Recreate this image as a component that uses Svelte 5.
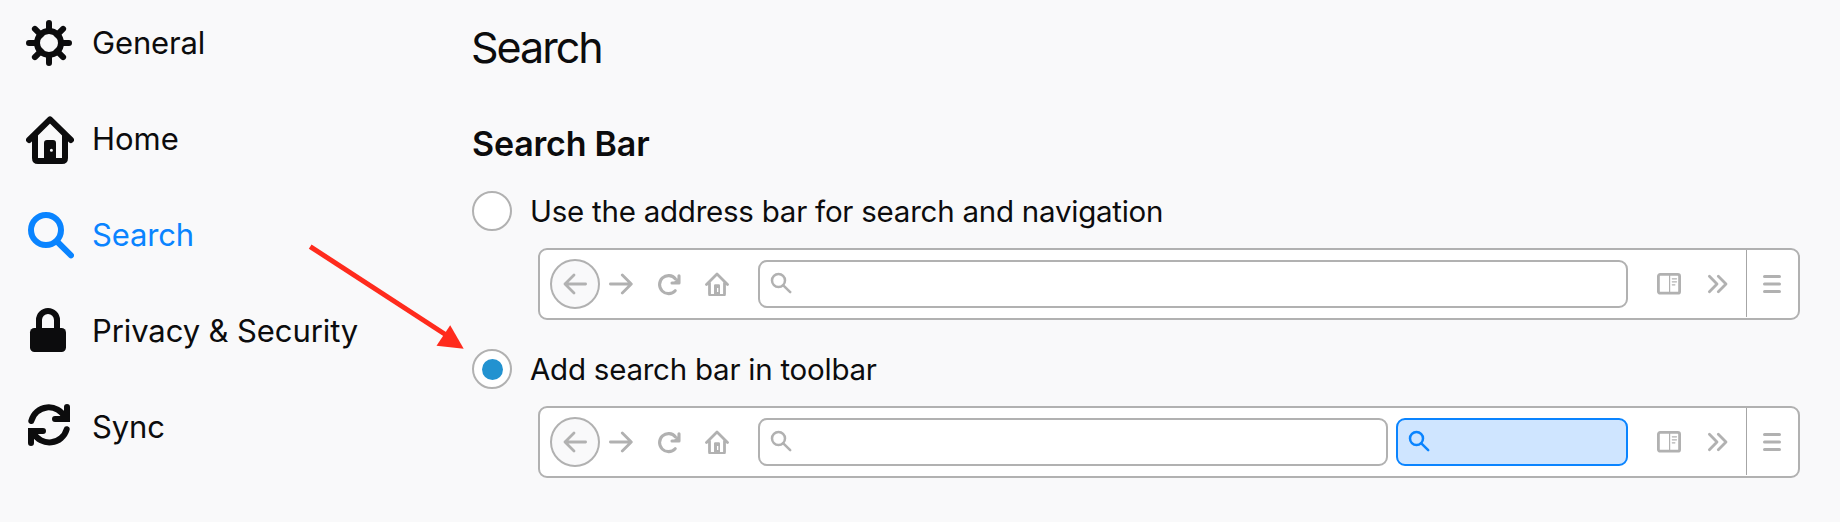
<script>
  const categories = [
    { id: 'general', label: 'General', spacing: -0.15 },
    { id: 'home', label: 'Home', spacing: -0.05 },
    { id: 'search', label: 'Search', spacing: -0.15 },
    { id: 'privacy', label: 'Privacy & Security', spacing: -0.1 },
    { id: 'sync', label: 'Sync', spacing: -0.1 }
  ];
  const options = [
    { id: 'address', label: 'Use the address bar for search and navigation', separate: false },
    { id: 'separate', label: 'Add search bar in toolbar', separate: true }
  ];
  let active = $state('search');
  let selected = $state('separate');
</script>

{#snippet magnifier()}
  <svg class="magnifier" viewBox="0 0 24 24">
    <circle cx="8.5" cy="8.5" r="6.5" /><path d="M13.3 13.3 20.2 20.2" />
  </svg>
{/snippet}

<div class="page">
  <nav>
    {#each categories as c (c.id)}
      <button class="category" class:active={active === c.id} onclick={() => (active = c.id)}>
        <svg viewBox="0 0 48 48">
          {#if c.id === 'general'}
            <circle cx="23" cy="23" r="12" />
            <path d="M23 3v8M23 35v8M3 23h8M35 23h8M8.9 8.9l6 6M31.1 31.1l6 6M8.9 37.1l6-6M31.1 14.9l6-6" />
          {:else if c.id === 'home'}
            <path d="M3 24 24 3.4 45 24M9 19v23q0 3 3 3h24q3 0 3-3V19" />
            <path class="solid" fill-rule="evenodd" d="M18 45V27q0-3 3-3h6q3 0 3 3v18zM25.4 32.8a1.5 1.5 0 1 0 0 3 1.5 1.5 0 0 0 0-3z" />
          {:else if c.id === 'search'}
            <circle cx="20" cy="18" r="15" /><path d="M31 29.5 45 43.3" />
          {:else if c.id === 'privacy'}
            <path d="M13 22V12a9 9 0 0 1 18 0v10" />
            <rect class="solid" x="4" y="20" width="36" height="24" rx="4.5" />
          {:else}
            <path d="M5.3 17A18 18 0 0 1 39 13.5M41 3v12H29M40.7 25.2A18 18 0 0 1 7.5 29M5 39V27h12" />
            <path class="solid" d="M41 5v13H30zM5 37V24h11zM38 18h6v-4zM2 28v-4h4z" />
          {/if}
        </svg>
        <span style="letter-spacing: {c.spacing}px">{c.label}</span>
      </button>
    {/each}
  </nav>

  <main>
    <h1>Search</h1>
    <h2>Search Bar</h2>
    {#each options as o (o.id)}
      <section>
        <button class="option" role="radio" aria-checked={selected === o.id} onclick={() => (selected = o.id)}>
          <span class="radio" class:checked={selected === o.id}></span>
          <span class="label">{o.label}</span>
        </button>
        <div class="toolbar">
          <span class="back">
            <svg viewBox="0 0 24 24"><path d="M22.6 12H2M11 3 2 12l9 9" /></svg>
          </span>
          <svg class="forward" viewBox="0 0 24 24"><path d="M1.4 12H22M13.3 3l9 9-9 9" /></svg>
          <svg class="reload" viewBox="0 0 24 24">
            <path d="M18.2 18.7A9 9 0 1 1 18.5 6.9" />
            <path d="M22 3.8V11H15" /><path class="solid" d="M22 5v6.5h-6.5z" />
          </svg>
          <svg class="home" viewBox="0 0 24 24">
            <path d="M1.5 12.6 12 2.1l10.5 10.5M4.5 11v11q0 1.3 1.3 1.3h12.4q1.3 0 1.3-1.3V11" />
            <path class="solid" fill-rule="evenodd" d="M9 23.5V13.5q0-1.2 1.2-1.2h3.6q1.2 0 1.2 1.2v10zM12 16v4h1.3v-4z" />
          </svg>
          <div class="field url">{@render magnifier()}</div>
          {#if o.separate}
            <div class="field search">{@render magnifier()}</div>
          {/if}
          <svg class="panel" viewBox="0 0 24 24">
            <rect x="1.4" y="2.4" width="21.2" height="18.8" rx="1.8" />
            <path class="thin" d="M12.6 3v17.5M15.3 6.8h4.2M15.3 9.8h4.2M15.3 12.8h2.6" />
          </svg>
          <svg class="more" viewBox="0 0 24 24"><path d="M4.4 4.3 12 12l-7.6 7.7M13.3 4.3 21 12l-7.7 7.7" /></svg>
          <span class="divider"></span>
          <svg class="menu" viewBox="0 0 24 24"><path d="M4.5 4.5h15M4.5 12h15M4.5 19.5h15" /></svg>
        </div>
      </section>
    {/each}
  </main>

  <svg class="pointer" viewBox="0 0 160 110">
    <path d="M2.2 5.6 142 96.5" />
    <path class="tip" d="M155.7 107.7 128.5 104.7 142.2 84.2z" />
  </svg>
</div>

<style>
  :global(body) { background: #f9f9fa; }
  .page {
    position: relative;
    display: flex;
    height: 522px;
    overflow: hidden;
    background: #f9f9fa;
    color: #0c0c0d;
    font-family: Inter, "Liberation Sans", sans-serif;
  }
  button {
    border: 0;
    padding: 0;
    background: none;
    color: inherit;
    font: inherit;
    text-align: left;
  }
  svg {
    display: block;
    flex: none;
    width: 24px;
    height: 24px;
    fill: none;
    stroke: currentColor;
    stroke-linecap: round;
    stroke-linejoin: round;
  }
  .solid { fill: currentColor; stroke: none; }
  nav {
    display: flex;
    flex-direction: column;
    gap: 48px;
    width: 472px;
    padding: 20px 0 0 26px;
    box-sizing: border-box;
    flex: none;
  }
  .category {
    display: flex;
    align-items: center;
    gap: 18px;
    height: 48px;
    font-size: 31px;
    line-height: 44px;
    white-space: nowrap;
  }
  .category span { padding-bottom: 3px; }
  .category svg { width: 48px; height: 48px; stroke-width: 6; }
  .category.active { color: #0a84ff; }
  main { width: 1328px; flex: none; }
  h1 {
    margin: 0 0 0 -1px;
    padding-top: 20px;
    font-size: 43px;
    font-weight: 400;
    line-height: 54px;
    letter-spacing: -2px;
  }
  h2 {
    margin: 0;
    padding-top: 49px;
    font-size: 34px;
    font-weight: 600;
    line-height: 42px;
    letter-spacing: -0.2px;
  }
  section { padding-top: 26px; height: 132px; }
  .option { display: flex; align-items: center; gap: 18px; height: 40px; }
  .radio {
    display: grid;
    place-items: center;
    width: 40px;
    height: 40px;
    box-sizing: border-box;
    border: 2px solid #b1b1b1;
    border-radius: 50%;
    background: #fff;
  }
  .radio.checked::after {
    content: "";
    width: 21px;
    height: 21px;
    border-radius: 50%;
    background: #2292d0;
  }
  .label { font-size: 29.5px; line-height: 40px; white-space: nowrap; letter-spacing: -0.24px; }
  .toolbar {
    display: flex;
    align-items: center;
    width: 1262px;
    height: 72px;
    margin: 17px 0 0 66px;
    padding: 0 14px 0 10px;
    box-sizing: border-box;
    border: 2px solid #b1b1b1;
    border-radius: 9px;
    background: #fff;
    color: #b1b1b1;
  }
  .toolbar svg { stroke-width: 2.8; }
  .back {
    display: grid;
    place-items: center;
    width: 50px;
    height: 50px;
    box-sizing: border-box;
    border: 2px solid #b1b1b1;
    border-radius: 50%;
    background: #f9f9fa;
  }
  .forward { margin-left: 9px; }
  .toolbar .reload { margin-left: 24px; stroke-width: 3.1; }
  .toolbar .home { margin-left: 24px; }
  .toolbar .magnifier { stroke-width: 2.5; }
  .field {
    display: flex;
    align-items: center;
    height: 48px;
    padding-left: 10px;
    box-sizing: border-box;
    border: 2px solid #b1b1b1;
    border-radius: 9px;
    background: #fff;
  }
  .url { flex: 1; margin-left: 29px; }
  .search { width: 232px; margin-left: 8px; border-color: #0a84ff; background: #cfe5ff; color: #0a84ff; }
  .panel { margin-left: 29px; }
  .toolbar .panel .thin { stroke-width: 1.2; }
  .more { margin-left: 24px; }
  .divider { width: 1px; height: 67px; margin: 0 13px 1px 17px; background: #a6a6a6; }
  .toolbar .menu { stroke-width: 3; }
  .pointer {
    position: absolute;
    left: 308px;
    top: 241px;
    width: 160px;
    height: 110px;
    stroke: #ff2b1d;
    stroke-width: 5;
    stroke-linecap: butt;
    pointer-events: none;
  }
  .tip { fill: #ff2b1d; stroke: none; }
</style>
